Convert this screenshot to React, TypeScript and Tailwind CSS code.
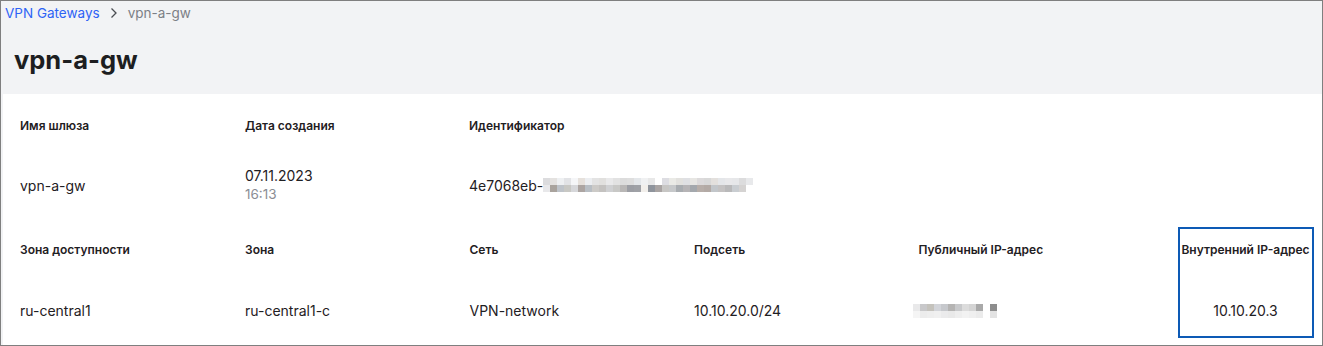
import React from "react";

const idMosaicTop = ["#dcdcde","#e4e2e0","#eef0f2","#e2e3e6","#f5f6f8","#e6e1dc","#eceef1","#e3e3e3","#e1e0de","#e9e9ea","#e2e2e2","#dcdcdc","#dedede","#e4e7ea","#f0f1f2","#e8e8e8","#ffffff","#dddde2","#eaeae6","#e2e1de","#dfe0e3","#e7e6e3","#dcdadb","#d8d8d8","#e3e0dd","#e4e6e9","#e8e8ea","#e6e7e9","#dcdcdd","#e8e9eb"];
const idMosaicBot = ["#e8e8ea","#a9a39d","#bec3c9","#c8c8c4","#d6d7da","#aca5a2","#b8bec4","#cccac7","#c4c2c0","#cfd0d2","#c8c8c6","#b9b7b6","#9c9ea4","#9fa1a6","#f2efeb","#8f949c","#a9a4a3","#c7c6c4","#c6c8ca","#a8acb0","#b6b4b6","#a4a8ad","#b7aea9","#b3aaa5","#c2c6ca","#c4c2c2","#b9b9ba","#c9cdd1","#d5d3d2","#ffffff"];
const ipTop = ["#e9e9ea","#c8c8ca","#c4c2bc","#d2d4d9","#c6c8cc","#b5b4b3","#c8c9cb","#dcdcdc","#d4d4d4","#a9a9a9","#ffffff","#8d8d8d"];
const ipBot = ["#f5f5f5","#ececec","#eeeeee","#f0f0f0","#ebebec","#e9e9e9","#eeeeee","#f2f2f2","#efefef","#ebebeb","#ffffff","#e3e3e3"];

function Mosaic({ top, bot }: { top: string[]; bot: string[] }) {
  return (
    <div className="flex flex-col">
      <div className="flex">
        {top.map((c, i) => (
          <div key={i} className="w-[7px] h-[7px]" style={{ backgroundColor: c }} />
        ))}
      </div>
      <div className="flex">
        {bot.map((c, i) => (
          <div key={i} className="w-[7px] h-[7px]" style={{ backgroundColor: c }} />
        ))}
      </div>
    </div>
  );
}

function Label({ children }: { children: React.ReactNode }) {
  return <div className="h-[20px] leading-[20px] text-[12px] font-semibold text-[#1f2023] whitespace-nowrap">{children}</div>;
}

export default function App() {
  return (
    <div
      className="w-[1323px] h-[346px] border border-[#7f7f7f] bg-[#f2f3f5] flex flex-col overflow-hidden"
      style={{ fontFamily: "Inter, 'Noto Sans', sans-serif" }}
    >
      <div className="h-[93px] flex flex-col">
        <div className="flex items-center h-[24px] pl-[4px] text-[13.5px] leading-[24px]">
          <span className="text-[#2e63f5]">VPN Gateways</span>
          <svg width="14" height="14" viewBox="0 0 14 14" className="ml-[7px] mr-[7px]">
            <path d="M4.5 2.5 L9 7 L4.5 11.5" fill="none" stroke="#4a4d52" strokeWidth="1.3" />
          </svg>
          <span className="text-[#7c7f86]">vpn-a-gw</span>
        </div>
        <div className="mt-[18px] pl-[13px] h-[34px] leading-[34px] text-[25.5px] font-bold text-[#1d1e21]">vpn-a-gw</div>
      </div>
      <div className="flex-1 ml-[2px] bg-white pl-[17px]">
        <div className="flex pt-[22px]">
          <div className="w-[225px] flex flex-col">
            <Label>Имя шлюза</Label>
            <div className="mt-[14px] h-[70px] flex items-center text-[14px] text-[#1f2023]">vpn-a-gw</div>
          </div>
          <div className="w-[224px] flex flex-col">
            <Label>Дата создания</Label>
            <div className="mt-[14px] h-[70px] flex flex-col justify-center text-[14px] leading-[18px]">
              <span className="text-[#1f2023]">07.11.2023</span>
              <span className="text-[13.5px] text-[#8a8d94]">16:13</span>
            </div>
          </div>
          <div className="w-[224px] flex flex-col">
            <Label>Идентификатор</Label>
            <div className="mt-[14px] h-[70px] flex items-center text-[14px] text-[#1f2023]">
              <span>4e7068eb-</span>
              <Mosaic top={idMosaicTop} bot={idMosaicBot} />
            </div>
          </div>
        </div>
        <div className="flex mt-[7px]">
          {[
            ["Зона доступности", "ru-central1"],
            ["Зона", "ru-central1-c"],
            ["Сеть", "VPN-network"],
            ["Подсеть", "10.10.20.0/24"],
          ].map(([l, v], i) => (
            <div key={i} className={i === 0 ? "w-[225px] flex flex-col" : "w-[224.5px] flex flex-col"}>
              <div className="mt-[13px]">
                <Label>{l}</Label>
              </div>
              <div className="mt-[41px] h-[20px] leading-[20px] text-[14px] text-[#1f2023] whitespace-nowrap">{v}</div>
            </div>
          ))}
          <div className="w-[224px] flex flex-col">
            <div className="mt-[13px]">
              <Label>Публичный IP-адрес</Label>
            </div>
            <div className="mt-[41px] h-[20px] flex items-center -ml-[6px]">
              <Mosaic top={ipTop} bot={ipBot} />
            </div>
          </div>
          <div className="ml-[35px] w-[136px] h-[111px] border-2 border-[#0d5ab5] flex flex-col items-center">
            <div className="mt-[11px]">
              <Label>Внутренний IP-адрес</Label>
            </div>
            <div className="mt-[41px] h-[20px] leading-[20px] text-[14px] text-[#1f2023]">10.10.20.3</div>
          </div>
        </div>
      </div>
    </div>
  );
}
